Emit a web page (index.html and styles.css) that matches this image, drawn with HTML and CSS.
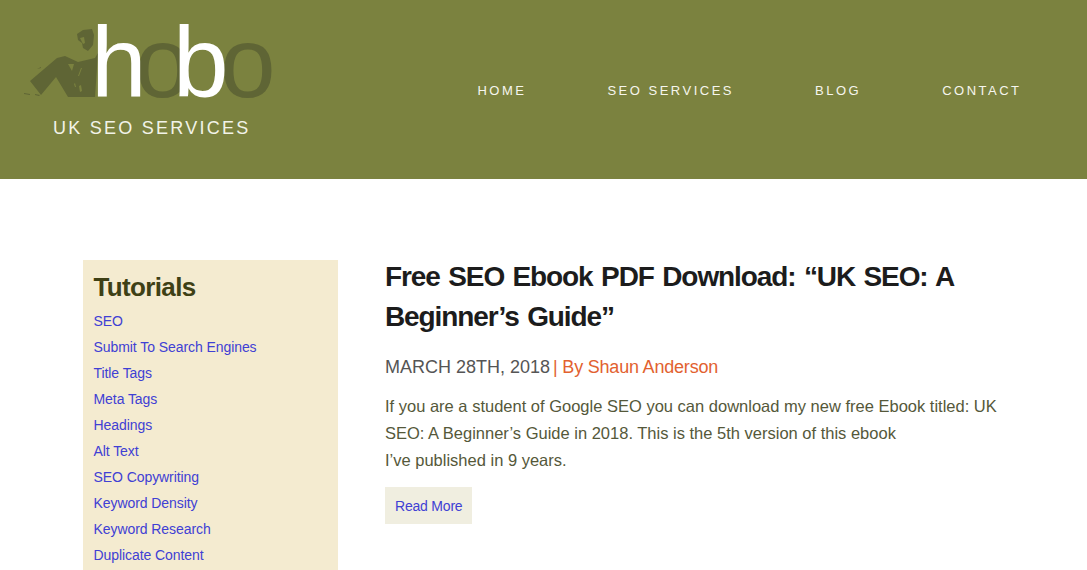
FILE: index.html
```html
<!DOCTYPE html>
<html lang="en">
<head>
<meta charset="utf-8">
<title>Hobo UK SEO Services</title>
<link rel="stylesheet" href="styles.css">
</head>
<body>
<header class="site-header">
  <a class="logo" href="#">
    <span class="logo-mark">
      <svg class="logo-figure" width="80" height="80" viewBox="0 0 80 80" aria-hidden="true">
        <path class="fig" d="M53 10 L59 6 L68 5 L70 11 L69 21 L64 27 L59 24 L58 19 L54 16 Z"/>
        <path class="cut" d="M56 14 L60 13 L61 19 L59 20 Z"/>
        <path class="fig" d="M6 57 L33 34 L41 32 L54 38 L71 34 L74 29 L71 73 L44 73 L32 53 L17 71 Z"/>
        <path class="cut" d="M44 40 L50 40 L48 47 Z M57 44 L58 44 L55 52 L54 52 Z M55 62 L57 61 L58 67 L56 68 Z M50 60 L51 59 L52 63 L51 63 Z"/>
        <path class="fig" d="M0 69 L6 70 L6 71 L0 70 Z M11 70 L16 71 L15 72 L11 71 Z M13 45 L17 43 L17 44 Z"/>
      </svg>
      <span class="logo-word"><span class="lt k1">h</span><span class="dk k2">o</span><span class="lt k3">b</span><span class="dk">o</span></span>
    </span>
    <span class="tagline">UK SEO SERVICES</span>
  </a>
  <nav class="main-nav">
    <a href="#">HOME</a>
    <a href="#">SEO SERVICES</a>
    <a href="#">BLOG</a>
    <a href="#">CONTACT</a>
  </nav>
</header>
<div class="page">
  <aside class="sidebar">
    <h3>Tutorials</h3>
    <ul>
      <li><a href="#">SEO</a></li>
      <li><a href="#">Submit To Search Engines</a></li>
      <li><a href="#">Title Tags</a></li>
      <li><a href="#">Meta Tags</a></li>
      <li><a href="#">Headings</a></li>
      <li><a href="#">Alt Text</a></li>
      <li><a href="#">SEO Copywriting</a></li>
      <li><a href="#">Keyword Density</a></li>
      <li><a href="#">Keyword Research</a></li>
      <li><a href="#">Duplicate Content</a></li>
    </ul>
  </aside>
  <main class="post">
    <h1>Free SEO Ebook PDF Download: “UK SEO: A Beginner’s Guide”</h1>
    <p class="meta">MARCH 28TH, 2018 <span class="author">| By Shaun Anderson</span></p>
    <p class="excerpt">If you are a student of Google SEO you can download my new free Ebook titled: UK SEO: A Beginner’s Guide in 2018. This is the 5th version of this ebook<br>I’ve published in 9 years.</p>
    <a class="more" href="#">Read More</a>
  </main>
</div>
</body>
</html>
```
FILE: styles.css
```css
html, body { margin: 0; padding: 0; height: 570px; overflow: hidden; }
body { background: #fff; font-family: "Liberation Sans", Arial, sans-serif; }
a { text-decoration: none; }

.site-header {
  height: 179px;
  background: #7b823f;
  display: flex;
  justify-content: space-between;
  align-items: flex-start;
  padding: 0 68px 0 24px;
  box-sizing: border-box;
}
.logo { display: flex; flex-direction: column; color: #fff; }
.logo-mark { position: relative; display: block; height: 110px; width: 250px; }
.logo-figure { position: absolute; left: 0; top: 24px; }
.fig { fill: #5f6535; }
.cut { fill: #7b823f; }
.logo-word {
  position: absolute;
  left: 67px;
  top: 4.5px;
  font-size: 100px;
  line-height: 115px;
  white-space: nowrap;
}
.logo-word span { position: relative; }
.lt { color: #fff; z-index: 2; }
.dk { color: #5f6535; z-index: 1; }
.k1 { letter-spacing: -11.6px; }
.k2 { letter-spacing: -17.6px; }
.k3 { letter-spacing: -8.6px; }
.tagline {
  margin: 8px 0 0 29px;
  font-size: 18px;
  line-height: 21px;
  letter-spacing: 2.25px;
  color: #f2f3e8;
}

.main-nav { display: flex; gap: 83.5px; padding-top: 83px; }
.main-nav a {
  color: #f6f6ee;
  font-size: 13px;
  line-height: 16px;
  letter-spacing: 2.5px;
  margin-right: -2.5px;
}

.page {
  display: flex;
  align-items: flex-start;
  padding: 81px 0 0 83px;
  gap: 47px;
}
.sidebar {
  width: 255px;
  flex: none;
  background: #f4ebd0;
  box-sizing: border-box;
  padding: 12px 10px 10px 10.5px;
}
.sidebar h3 {
  margin: 0 0 6px;
  font-size: 26px;
  line-height: 30px;
  letter-spacing: -0.65px;
  color: #3e4015;
}
.sidebar ul { list-style: none; margin: 0; padding: 0; }
.sidebar li { height: 26px; line-height: 26px; font-size: 14px; letter-spacing: -0.07px; }
.sidebar a { color: #4040d4; }

.post { width: 620px; }
.post h1 {
  margin: -3px 0 0;
  font-size: 28px;
  line-height: 40px;
  letter-spacing: -1.1px;
  word-spacing: 1.8px;
  color: #1c1c1c;
}
.meta {
  margin: 17px 0 0;
  font-size: 18px;
  line-height: 26px;
  color: #555;
}
.author { color: #e2612f; margin-left: -2px; letter-spacing: -0.2px; }
.excerpt {
  margin: 13px 0 0;
  font-size: 16.5px;
  line-height: 27px;
  color: #55583a;
}
.more {
  display: inline-block;
  margin-top: 13px;
  padding: 0 10px;
  height: 37px;
  line-height: 38px;
  background: #f0eee0;
  color: #4040d4;
  font-size: 14px;
  letter-spacing: -0.2px;
}
```
